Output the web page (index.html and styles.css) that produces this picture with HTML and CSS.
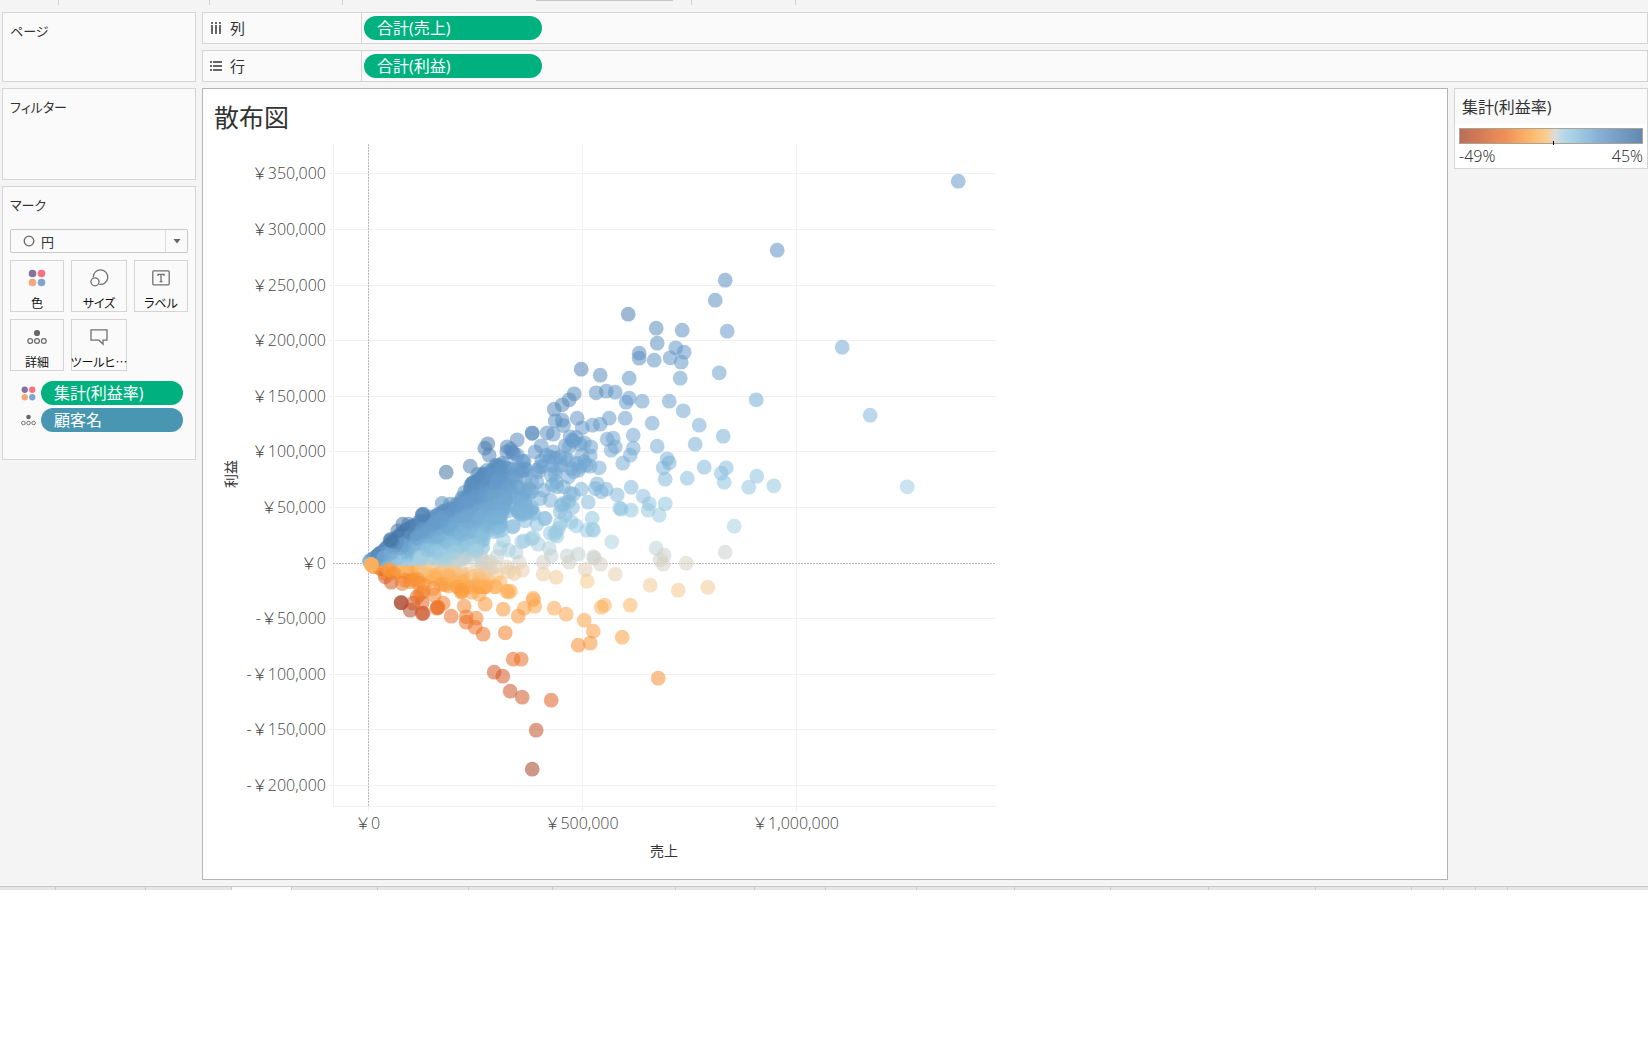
FILE: index.html
```html
<!DOCTYPE html>
<html lang="ja">
<head>
<meta charset="utf-8">
<title>散布図</title>
<link rel="stylesheet" href="styles.css">
</head>
<body>
<svg class="sprite" aria-hidden="true">
  <symbol id="i-color" viewBox="0 0 18 18"><circle cx="4.5" cy="4.5" r="3.8" fill="#86709c"/><circle cx="13.5" cy="4.5" r="3.8" fill="#f9707f"/><circle cx="4.5" cy="13.5" r="3.8" fill="#f4a77c"/><circle cx="13.5" cy="13.5" r="3.8" fill="#7fa5ce"/></symbol>
  <symbol id="i-detail" viewBox="0 0 20 16"><circle cx="10" cy="4" r="3.1" fill="#666"/><g fill="none" stroke="#707070" stroke-width="1.3"><circle cx="3.2" cy="12" r="2.4"/><circle cx="10" cy="12" r="2.4"/><circle cx="16.8" cy="12" r="2.4"/></g></symbol>
</svg>
<div class="app">
  <div class="toolbar" aria-hidden="true"><i></i><i></i><i></i><i></i><b></b><i></i><i></i></div>
  <div class="workspace">
    <aside class="side">
      <section class="card pages"><h2>ページ</h2></section>
      <section class="card filters"><h2>フィルター</h2></section>
      <section class="card marks">
        <h2>マーク</h2>
        <button class="picker" type="button" aria-label="マークの種類">
          <svg width="12" height="12" viewBox="0 0 12 12"><circle cx="6" cy="6" r="4.8" fill="none" stroke="#666" stroke-width="1.3"/></svg>
          <span>円</span>
          <span class="arrow"><svg width="8" height="5" viewBox="0 0 8 5"><path d="M.5 0h7L4 4.5z" fill="#666"/></svg></span>
        </button>
        <div class="shelf-buttons">
          <button type="button"><svg width="18" height="18"><use href="#i-color"/></svg>色</button>
          <button type="button"><svg width="20" height="18" viewBox="0 0 20 18" fill="none" stroke="#707070" stroke-width="1.3"><path d="M4.2 8.2A7.3 7.3 0 1 1 10.3 15.3"/><circle cx="6" cy="12.8" r="4"/></svg>サイズ</button>
          <button type="button"><svg width="18" height="18" viewBox="0 0 18 18" fill="none" stroke="#707070" stroke-width="1.3"><rect x=".8" y="1.8" width="16.4" height="14" rx="1"/><path d="M6 7V5.3h6V7M9 5.3v7.4M7.5 12.7h3"/></svg>ラベル</button>
          <button type="button"><svg width="20" height="18"><use href="#i-detail"/></svg>詳細</button>
          <button type="button"><svg width="20" height="18" viewBox="0 0 20 18" fill="none" stroke="#707070" stroke-width="1.3"><path d="M2 1.8h16v10.4h-4v4l-4-4H2z"/></svg>ツールヒ…</button>
        </div>
        <ul class="encodings">
          <li><svg width="15" height="15"><use href="#i-color"/></svg><button type="button" class="pill">集計(利益率)</button></li>
          <li><svg width="15" height="12"><use href="#i-detail"/></svg><button type="button" class="pill dim">顧客名</button></li>
        </ul>
      </section>
    </aside>
    <main class="content">
      <div class="shelf">
        <div class="shelf-name"><svg width="12" height="14" viewBox="0 0 12 14" fill="#666"><path d="M1 1h2v2H1zM5 1h2v2H5zM9 1h2v2H9zM1 4h2v9H1zM5 4h2v9H5zM9 4h2v9H9z"/></svg>列</div>
        <button type="button" class="pill">合計(売上)</button>
      </div>
      <div class="shelf">
        <div class="shelf-name"><svg width="12" height="14" viewBox="0 0 12 14" fill="#666"><path d="M0 2h2v2H0zM3 2h9v2H3zM0 6h2v2H0zM3 6h9v2H3zM0 10h2v2H0zM3 10h9v2H3z"/></svg>行</div>
        <button type="button" class="pill">合計(利益)</button>
      </div>
      <div class="lower">
        <section class="sheet">
          <h1>散布図</h1>
          <svg id="chart" width="800" height="730" viewBox="0 0 800 730" role="img" aria-label="売上と利益の散布図"></svg>
        </section>
        <aside class="legend">
          <h2>集計(利益率)</h2>
          <div class="ramp"></div>
          <div class="range"><span>-49%</span><span>45%</span></div>
        </aside>
      </div>
    </main>
  </div>
  <div class="tabs" aria-hidden="true"><i></i><i></i><i></i><i class="active"></i><i></i><i></i><i></i><i></i><i></i><i></i><i></i><i></i><i></i><i></i><i></i><i></i><i></i><i></i><i></i><i></i></div>
</div>
<script src="chart.js"></script>
</body>
</html>
```
FILE: styles.css
```css
* { box-sizing: border-box; }
body { margin: 0; background: #fff; color: #333; font-family: "Open Sans", "Noto Sans CJK JP", sans-serif; font-size: 16px; }
h1, h2, ul { margin: 0; padding: 0; font-weight: 400; list-style: none; }
button { font: inherit; color: inherit; margin: 0; padding: 0; border: 0; background: none; }
svg { display: block; flex: none; }
.sprite { position: absolute; width: 0; height: 0; }
.app { background: #f4f4f4; }

.toolbar { display: grid; grid-template-columns: 59px 151px 133px 193px 137px 19px 104px; height: 12px; align-items: start; }
.toolbar i { height: 5px; border-right: 1px solid #d4d4d4; }
.toolbar i:nth-child(4) { border: 0; }
.toolbar b { height: 1px; background: #c8c8c8; }

.workspace { display: flex; gap: 6px; padding-bottom: 6px; }
.side { flex: none; width: 196px; padding-left: 2px; display: flex; flex-direction: column; gap: 6px; }
.card { border: 1px solid #d4d4d4; background: #fafafa; padding: 8px 7px; }
.card h2 { font-size: 13px; line-height: 20px; font-feature-settings: "palt"; }
.pages { height: 70px; }
.filters { height: 92px; }
.marks { height: 274px; }
.picker { display: flex; align-items: center; width: 100%; height: 24px; margin-top: 14px; border: 1px solid #c8c8c8; border-radius: 2px; padding-left: 12px; gap: 6px; font-size: 13px; }
.arrow { margin-left: auto; width: 22px; height: 22px; border-left: 1px solid #ddd; display: grid; place-items: center; }
.shelf-buttons { display: grid; grid-template-columns: 54px 56px 54px; justify-content: space-between; gap: 7px 6px; margin-top: 7px; }
.shelf-buttons button { height: 52px; border: 1px solid #d4d4d4; display: flex; flex-direction: column; align-items: center; padding-top: 8px; gap: 7px; font-family: "Noto Sans CJK JP", sans-serif; font-size: 12px; line-height: 18px; color: #111; font-feature-settings: "palt"; white-space: nowrap; }
.encodings { margin-top: 10px; display: grid; gap: 3px; }
.encodings li { display: flex; align-items: center; gap: 5px; padding: 0 5px 0 11px; }
.pill { height: 24px; border-radius: 12px; background: #00b180; color: #fff; text-align: left; padding-left: 13px; line-height: 24px; flex: 1; }
.pill.dim { background: #4996b2; }

.content { flex: 1; min-width: 0; }
.shelf { display: flex; align-items: center; height: 32px; margin-bottom: 6px; border: 1px solid #d4d4d4; background: #fafafa; }
.shelf-name { display: flex; align-items: center; gap: 8px; width: 159px; height: 30px; padding: 0 0 1px 7px; border-right: 1px solid #d4d4d4; font-size: 15px; }
.shelf .pill { flex: none; width: 178px; margin-left: 2px; }
.lower { display: flex; gap: 6px; align-items: flex-start; }
.sheet { flex: 1; min-width: 0; border: 1px solid #b4b4b4; background: #fff; height: 792px; }
.sheet h1 { font-size: 25px; line-height: 40px; padding: 8px 0 3px 11px; }
.legend { flex: none; width: 194px; border: 1px solid #d4d4d4; background: #fff; height: 81px; }
.legend h2 { font-size: 16px; line-height: 33px; padding: 2px 0 0 7px; background: #fafafa; }
.ramp { position: relative; height: 16px; margin: 4px; border: 1px solid #aaa592; background: linear-gradient(90deg, #b86f59 0%, #d77c58 12%, #f09058 25%, #fdbb70 40%, #ffcb8c 47%, #dcdcd5 52%, #b5d9eb 57%, #a0c9e2 65%, #86aed6 77%, #628ab0 100%); }
.ramp::after { content: ""; position: absolute; left: 51%; bottom: -2px; width: 1px; height: 4px; background: #000; }
.range { display: flex; justify-content: space-between; padding: 0 4px; font-size: 16px; font-weight: 300; line-height: 16px; color: #222; }

.tabs { display: grid; grid-template-columns: 56px 90px 86px 60px 86px 91px 84px 123px 79px 71px 91px 98px 96px 98px 107px 96px 32px 32px 32px 1fr; height: 4px; border-top: 1px solid #c8c8c8; background: #e6e6e6; }
.tabs i { border-right: 1px solid #c8c8c8; }
.tabs i:last-child { border: 0; }
.tabs .active { background: #fafafa; }

.grid { stroke: #f1f1f1; }
.zero { stroke: #bbb; stroke-dasharray: 2 1; }
.tick { font-size: 16px; font-weight: 300; fill: #444; }
.axis { font-size: 14px; fill: #333; text-anchor: middle; }
.end { text-anchor: end; }
.mid { text-anchor: middle; }
```
FILE: chart.js
```js
const NS = "http://www.w3.org/2000/svg";
const chart = document.getElementById("chart");
const ZERO_X = 165.5, ZERO_Y = 423.5;

function add(name, attrs, text) {
  const el = document.createElementNS(NS, name);
  for (const k in attrs) el.setAttribute(k, attrs[k]);
  if (text) el.textContent = text;
  chart.appendChild(el);
}
function yen(v) { return (v < 0 ? "-" : "") + "￥" + Math.abs(v).toLocaleString("en-US"); }

// Gridlines and tick labels
for (let k = -4; k <= 7; k++) {
  const y = Math.round(ZERO_Y - k * 55.6 - 1) + 0.5;
  if (k) add("line", { x1: 126, x2: 793, y1: y, y2: y, class: "grid" });
  add("text", { x: 123, y: y + 5.5, class: "tick end" }, yen(k * 50000));
}
for (let k = 0; k <= 2; k++) {
  const x = ZERO_X + k * 214;
  add("line", { x1: x, x2: x, y1: 4, y2: 671, class: "grid" });
  add("text", { x: x - 1, y: 689, class: "tick mid" }, yen(k * 500000));
}
add("path", { d: "M130.5 4V666.5H793", fill: "none", class: "grid" });
add("line", { x1: 130, x2: 793, y1: ZERO_Y, y2: ZERO_Y, class: "zero" });
add("line", { x1: ZERO_X, x2: ZERO_X, y1: 4, y2: 666, class: "zero" });
add("text", { x: 461, y: 716, class: "axis" }, "売上");
add("text", { x: 0, y: 0, class: "axis", transform: "translate(33 334) rotate(-90)" }, "利益");

// Profit ratio colour scale
const RAMP = [[-0.49, 160, 62, 38], [-0.38, 193, 76, 38], [-0.29, 225, 94, 34], [-0.2, 241, 124, 40], [-0.13, 249, 150, 54],
  [-0.06, 254, 180, 95], [-0.03, 244, 200, 145], [-0.015, 230, 208, 180], [0, 214, 209, 197], [0.015, 196, 208, 207],
  [0.04, 166, 208, 226], [0.08, 144, 197, 224], [0.12, 126, 181, 217], [0.25, 100, 152, 200], [0.37, 76, 126, 176], [0.45, 65, 112, 160]];
function colour(r) {
  r = Math.max(-0.489, Math.min(0.449, r));
  const i = RAMP.findIndex(s => s[0] > r), a = RAMP[i - 1], b = RAMP[i], t = (r - a[0]) / (b[0] - a[0]);
  return "rgb(" + [1, 2, 3].map(n => Math.round(a[n] + (b[n] - a[n]) * t)).join(",") + ")";
}

// Customers: x, y in thirds of a pixel, with the chart's zero at (25, 790)
const points = `1794 -357 1251 -150 1095 -60 1065 0 1446 141 1530 345 1641 560 1241 557
804 42 888 84 966 90 1101 93 891 129 837 159 837 174 882 180 947 143 972 156 930 173 963 186 663 207 720 225 807 234 960 234 1077 218 1188 299
642 281 627 299 606 314 582 327 708 278 738 273 765 276 807 294 798 306 846 303 927 303 969 332 585 362 606 360 610 376 651 354 666 383 697 375 720 372 747 354 795 354 876 369 1017 375 1089 408 1005 432
516 398 516 400 561 398 579 402 471 419 383 431 374 444 387 465 330 498 258 516 353 522 441 440 456 455 460 460 440 455 452 447 471 465 543 437 525 455 492 482 488 484
819 405 741 417 759 414 765 440 753 450 819 444 810 465 788 489 891 438 921 476 927 488 909 503 915 537 981 534 1032 501 1083 519 1098 503 1092 546 1190 528 1166 561
717 503 692 440 690 467 672 428 630 410 636 420 648 412 615 437 627 440 640 423 660 432 665 465 672 485 660 500 678 495 690 498 655 510 625 480 615 475 600 470 579 455 585 475 570 470 558 465 545 482 540 500 530 510 535 515 549 498 575 495 590 505 585 520 573 525 588 545 576 555 590 560 610 560 625 530 640 515 650 490 632 505 603 495
711 551 705 565 723 575 738 567 771 584 813 561 849 588 867 611 864 630 813 630 783 627 779 624 897 645 915 611 684 606 663 567 696 654 697 688 700 690 680 690 648 677 633 665 630 580 640 582 610 610 603 615 625 605 637 622 600 635 615 645 600 670 595 685 588 695 583 703 590 708 570 699 570 600 540 595 550 570 515 573 530 545 515 545 553 655 555 655 530 672 520 640 515 622 500 630 490 640 480 630 485 645 495 662 478 640 519 712 514 716 492 722 485 725 534 732 567 744 755 725 457 680 460 678
888 744 912 765 900 779 909 792 978 789 1095 756 1122 678 573 767 549 786 621 767 627 786 654 762 700 770 703 774 721 792 675 808 681 843 765 822 549 822 588 831 870 855 954 870 1043 861
477 786 487 810 462 820 440 800 468 756 445 750 430 720 420 745 445 815 410 770 390 785 375 790 405 800
519 894 520 899 524 918 492 924 474 948 429 927 582 924 618 942 672 960 699 993 690 1029 654 1035 786 1011 894 1134 723 921 733 915 810 915 451 873 444 875 440 873 420 848 375 912 357 882 335 876 312 918 303 876 306 874 304 870 318 950 318 966 348 954 345 981 369 1002 435 998 273 948 230 924 234 922 232 921 249 909 222 885 219 865
459 1077 483 1077 402 1116 428 1128 450 1173 486 1191 573 1200 528 1290 516 1407
123 907 123 908 150 930 159 909 186 940 189 939 186 908 171 890 180 880 189 875 192 855 93 846 75 830 126 850 135 840 75 820 84 810 88 808 100 820 150 845 160 840 172 838 175 850
128 672 113 692 145 672 90 720 92 718 246 610 270 612 187 643 190 642 186 645 40 800 35 795 32 792 33 793 35 794`.trim().split(/\s+/).map(Number);

let seed = 7;
function rand() { seed = (seed * 16807) % 2147483647; return seed / 2147483647; }
const EDGE = [[28, 787], [60, 757], [95, 722], [135, 688], [190, 655], [240, 638], [295, 605], [325, 555], [390, 500], [450, 480], [520, 500]];
function edge(x) {
  const i = EDGE.findIndex(e => e[0] > x), a = EDGE[i - 1], b = EDGE[i];
  return a[1] + (b[1] - a[1]) * (x - a[0]) / (b[0] - a[0]);
}
// Small accounts cluster near the origin
const cloud = [];
for (let i = 0; i < 110; i++) {
  const x = 60 + 350 * Math.pow(rand(), 1.3), slope = 0.01 + 0.13 * rand();
  cloud.push(x, 795 + Math.min(65, (x - 25) * slope * 2));
}
for (let i = 0; i < 780; i++) {
  const x = 28 + 400 * Math.pow(rand(), 0.75), top = edge(x), t = Math.pow(rand(), 0.85);
  if (x > 370 && t < 0.3) continue;
  cloud.push(x, 780 - (780 - top) * t);
}
for (let i = 0; i < 60; i++) {
  const x = 400 + 115 * rand();
  cloud.push(x, 500 + 145 * rand());
}
const all = cloud.concat(points);
for (let i = 0; i < all.length; i += 2) {
  const dx = all[i] - 25, dy = 790 - all[i + 1];
  add("circle", { cx: (ZERO_X + dx / 3).toFixed(1), cy: (ZERO_Y - dy / 3).toFixed(1), r: 7.4, fill: colour(0.385 * dy / Math.max(dx, 20)), "fill-opacity": 0.54 });
}
```
